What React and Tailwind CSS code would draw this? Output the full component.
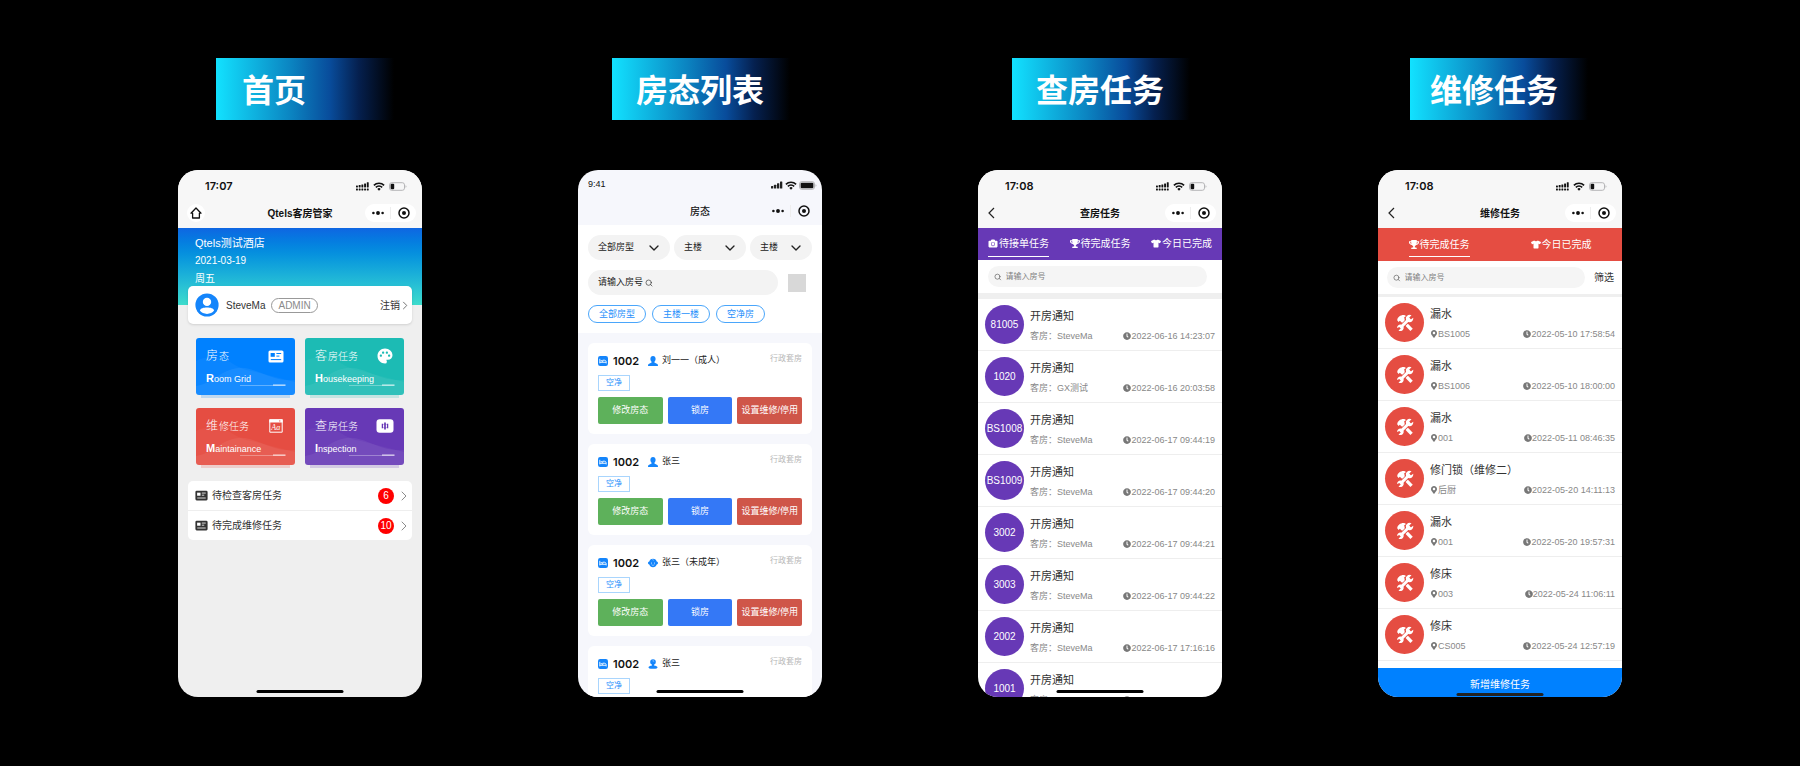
import React from 'react';
import { FaCamera, FaTrophy, FaTshirt, FaClock, FaMapMarkerAlt } from 'react-icons/fa';
import { MdPalette } from 'react-icons/md';
import { ChevronDown, ChevronRight, Search } from 'lucide-react';

/* ---------- icons ---------- */

function SignalDual() {
  return (
    <svg viewBox="0 0 13 9" className="h-[9px] w-[13px]" fill="#111" aria-hidden="true">
      <rect x="0" y="3.6" width="1.9" height="1.9" rx=".4" />
      <rect x="2.7" y="3" width="1.9" height="2.5" rx=".4" />
      <rect x="5.4" y="2.4" width="1.9" height="3.1" rx=".4" />
      <rect x="8.1" y="1.4" width="1.9" height="4.1" rx=".4" />
      <rect x="10.8" y=".2" width="1.9" height="5.3" rx=".4" />
      {[0, 2.7, 5.4, 8.1, 10.8].map((x) => (
        <rect key={x} x={x} y="6.6" width="1.9" height="1.9" rx=".4" />
      ))}
    </svg>
  );
}

function SignalBars() {
  return (
    <svg viewBox="0 0 12 8" className="h-2 w-3" fill="#222" aria-hidden="true">
      <rect x="0" y="5" width="2.3" height="2.5" rx=".5" />
      <rect x="3" y="3.8" width="2.3" height="3.7" rx=".5" />
      <rect x="6" y="2.2" width="2.3" height="5.3" rx=".5" />
      <rect x="9" y=".6" width="2.3" height="6.9" rx=".5" />
    </svg>
  );
}

function Wifi() {
  return (
    <svg viewBox="0 0 12 9" className="h-[9px] w-3" aria-hidden="true">
      <path d="M.9 3.4a7.3 7.3 0 0 1 10.2 0" fill="none" stroke="#111" strokeWidth="1.6" />
      <path d="M2.8 5.4a4.6 4.6 0 0 1 6.4 0" fill="none" stroke="#111" strokeWidth="1.5" />
      <path d="M4.3 6.9a2.5 2.5 0 0 1 3.4 0L6 8.7z" fill="#111" />
    </svg>
  );
}

function Battery({ full }) {
  return (
    <svg viewBox="0 0 18 9" className="h-[9px] w-[18px]" aria-hidden="true">
      <rect x=".5" y=".7" width="15" height="7.6" rx="2.2" fill="none" stroke="#b5b5b7" />
      <path d="M16.6 3.2c1 .5 1 2.1 0 2.6z" fill="#a5a5a7" />
      <rect x="1.6" y="1.8" width={full ? 12.8 : 3.6} height="5.4" rx="1" fill="#111" />
    </svg>
  );
}

function HomeIcon() {
  return (
    <svg viewBox="0 0 12 12" className="h-3 w-3" fill="none" stroke="#111" strokeWidth="1.3" strokeLinejoin="round" aria-hidden="true">
      <path d="M6 1 11 6.2H9.4V11H2.6V6.2H1z" />
    </svg>
  );
}

function BackIcon() {
  return (
    <svg viewBox="0 0 7 12" className="h-3 w-[7px]" fill="none" stroke="#222" strokeWidth="1.2" aria-hidden="true">
      <path d="M6 1 1 6l5 5" />
    </svg>
  );
}

function NewsIcon({ fg, hole, className }) {
  return (
    <svg viewBox="0 0 16 13" className={className} aria-hidden="true">
      <rect x=".5" y=".5" width="15" height="12" rx="1.6" fill={fg} />
      <rect x="2.6" y="3" width="4.2" height="3.8" fill={hole} />
      <path d="M8.4 3.5h4.8M8.4 6.1h3M2.8 9.6h10.4" stroke={hole} strokeWidth="1" />
    </svg>
  );
}

function BrandIcon() {
  return (
    <svg viewBox="0 0 14 14" className="h-[14px] w-[14px]" aria-hidden="true">
      <path d="M.8.8h12.4v12.4H.8z" fill="none" stroke="#fff" strokeWidth="1" />
      <path d="M.3.3h13.4v3.2H.3z" fill="#fff" />
      <circle cx="10.8" cy="1.9" r=".6" fill="#e54d42" />
      <text x="6.8" y="11" fontSize="8" fontStyle="italic" textAnchor="middle" fill="#fff" fontFamily="Liberation Serif, serif">Aa</text>
    </svg>
  );
}

function InspectIcon() {
  return (
    <svg viewBox="0 0 18 14" className="h-[14px] w-[18px]" aria-hidden="true">
      <rect x=".5" y=".3" width="17" height="13.4" rx="3.2" fill="#fff" />
      <path d="M9 3.4v7.2" stroke="#6739b6" strokeWidth="1.7" />
      <path d="M6.4 4.7v4.6M11.6 4.7v4.6" stroke="#6739b6" strokeWidth="1.3" />
      <path d="M6.4 5.4h5.2M6.4 8.6h5.2" stroke="#6739b6" strokeOpacity=".45" strokeWidth=".8" />
    </svg>
  );
}

function ToolsIcon() {
  return (
    <svg viewBox="0 0 18 18" className="h-[18px] w-[18px]" fill="none" aria-hidden="true">
      <path d="M6.2 6.2 15.6 15.8" stroke="#fff" strokeWidth="3.3" />
      <path d="M1.2 6.2C1.6 3 4.4.8 8.2 1l1.9.9-1.9 1.4.5 2.5-2.9 2.7-2-1.7-1.2 1.1z" fill="#fff" />
      <path d="M5.2 13.2 13.3 5" stroke="#e54d42" strokeWidth="4.6" />
      <path d="M4.4 13.8 13.8 4.4" stroke="#fff" strokeWidth="2.9" />
      <path d="M15.5 1.3a3.7 3.7 0 1 0 1.7 2.5l-2.4 1.6-1.7-1.6z" fill="#fff" />
      <path d="M2.5 16.5a3.3 3.3 0 1 0-1.4-2.4l2.2-1.2 1.5 1.5z" fill="#fff" />
    </svg>
  );
}

function Avatar() {
  return (
    <svg viewBox="0 0 24 24" className="h-6 w-6" aria-hidden="true">
      <circle cx="12" cy="12" r="11.6" fill="#1485fb" />
      <circle cx="12" cy="8.9" r="4.2" fill="#fff" />
      <path d="M4.9 17.6c.6-2.6 3.6-3.2 7.1-3.2s6.5.6 7.1 3.2c-1.5 2.1-4.2 3.3-7.1 3.3s-5.6-1.2-7.1-3.3z" fill="#fff" />
    </svg>
  );
}

function BedIcon() {
  return (
    <svg viewBox="0 0 10 10" className="h-[10px] w-[10px]" aria-hidden="true">
      <rect width="10" height="10" rx="2.2" fill="#1485fb" />
      <path d="M1.8 2.8v4.6M1.8 6.3h6.4v1.1M4.7 6V4.2h1.6c1.1 0 1.9.7 1.9 2" fill="none" stroke="#fff" strokeWidth=".9" />
      <circle cx="3.2" cy="4.7" r=".7" fill="#fff" />
    </svg>
  );
}

function GuestIcon({ kind }) {
  if (kind === 'child') {
    return (
      <svg viewBox="0 0 10 10" className="h-[10px] w-[10px]" aria-hidden="true">
        <path d="M5 .7c2.2 0 3.3 1.3 3.7 2.9.8.1 1.3.7 1.3 1.5s-.5 1.4-1.3 1.5C8.2 8.2 6.9 9.3 5 9.3S1.8 8.2 1.3 6.6C.5 6.5 0 5.9 0 5.1s.5-1.4 1.3-1.5C1.7 2 2.8.7 5 .7z" fill="#1485fb" />
        <circle cx="3.5" cy="4.9" r=".5" fill="#fff" />
        <circle cx="6.5" cy="4.9" r=".5" fill="#fff" />
        <path d="M3.6 6.7c.8.8 2 .8 2.8 0M5 1.1c-.5.6-.3 1.2.4 1.2" fill="none" stroke="#fff" strokeWidth=".5" />
      </svg>
    );
  }
  if (kind === 'elder') {
    return (
      <svg viewBox="0 0 10 10" className="h-[10px] w-[10px]" aria-hidden="true">
        <circle cx="5" cy="3" r="2.8" fill="#1485fb" />
        <path d="M4 5h2v1.5c2 .3 3.5.9 3.5 2 0 1-1 1.3-4.5 1.3S.5 9.5.5 8.5c0-1.1 1.5-1.7 3.5-2z" fill="#1485fb" />
        <path d="M4.6 1.8c.7-.4 1.3 0 1.1.8" fill="none" stroke="#fff" strokeWidth=".5" />
      </svg>
    );
  }
  return (
    <svg viewBox="0 0 10 10" className="h-[10px] w-[10px]" aria-hidden="true">
      <path d="M5 0c1.6 0 2.6 1.2 2.6 2.8 0 1.3-.5 2.4-1.2 3v.8L9.3 8c.5.3.7.9.7 2H0c0-1.1.2-1.7.7-2l2.9-1.4v-.8c-.7-.6-1.2-1.7-1.2-3C2.4 1.2 3.4 0 5 0z" fill="#1485fb" />
    </svg>
  );
}

/* ---------- phone shell ---------- */

function Phone({ label, bg, bar = 'bottom-[4px] bg-black', children }) {
  return (
    <section
      aria-label={label}
      className={`relative flex aspect-[244/527] w-full max-w-[244px] flex-col overflow-hidden rounded-[20px] ${bg}`}
    >
      {children}
      <div className={`absolute left-1/2 h-[3px] w-[87px] -translate-x-1/2 rounded-full ${bar}`} />
    </section>
  );
}

function Capsule({ plain }) {
  return (
    <div className={`flex h-[18px] w-[51px] items-center rounded-full ${plain ? '' : 'bg-white'}`}>
      <button aria-label="更多" className="flex flex-1 justify-center">
        <svg viewBox="0 0 12 4" className="h-1 w-3" fill="#111" aria-hidden="true">
          <circle cx="1.4" cy="2" r="1.3" />
          <circle cx="6" cy="2" r="1.95" />
          <circle cx="10.6" cy="2" r="1.3" />
        </svg>
      </button>
      <span className="h-3 w-px bg-[#eeeeee]" />
      <button aria-label="关闭" className="flex flex-1 justify-center">
        <svg viewBox="0 0 12 12" className="h-3 w-3" aria-hidden="true">
          <circle cx="6" cy="6" r="5" fill="none" stroke="#111" strokeWidth="1.5" />
          <circle cx="6" cy="6" r="2" fill="#111" />
        </svg>
      </button>
    </div>
  );
}

function NavRow({ title, left, plain }) {
  return (
    <div className="grid h-[22px] grid-cols-[1fr_auto_1fr] items-center px-[6px]">
      <div className="flex">{left}</div>
      <h2 className={`pt-[2px] text-[10px] leading-5 text-[#111] ${plain ? 'font-medium' : 'font-bold'}`}>{title}</h2>
      <div className="flex justify-end">
        <Capsule plain={plain} />
      </div>
    </div>
  );
}

function Header({ time, title, home }) {
  return (
    <header className="shrink-0 bg-[#f7f7f7] pb-1">
      <div className="flex h-8 items-center justify-between pr-[15px] pl-[27px]">
        <span className="font-[Inter,sans-serif] text-[11px] leading-4 font-semibold text-[#111]">{time}</span>
        <div className="flex items-center gap-1">
          <SignalDual />
          <Wifi />
          <Battery />
        </div>
      </div>
      <NavRow
        title={title}
        left={
          home ? (
            <button aria-label="首页" className="ml-[3px] flex h-[18px] w-[18px] items-center justify-center rounded-full bg-white">
              <HomeIcon />
            </button>
          ) : (
            <button aria-label="返回" className="ml-1">
              <BackIcon />
            </button>
          )
        }
      />
    </header>
  );
}

/* ---------- home ---------- */

const modules = [
  {
    head: '房', rest: '态', cap: 'R', en: 'oom Grid',
    tone: 'bg-[#0081ff] shadow-[0_8px_0_-5px_#bfd8ef]',
    icon: <NewsIcon fg="#fff" hole="#0081ff" className="h-[13px] w-4" />,
  },
  {
    head: '客', rest: '房任务', cap: 'H', en: 'ousekeeping',
    tone: 'bg-[#1cbbb4] shadow-[0_8px_0_-5px_#c5e4e2]',
    icon: <MdPalette className="h-[18px] w-[18px]" />,
  },
  {
    head: '维', rest: '修任务', cap: 'M', en: 'aintainance',
    tone: 'bg-[#e54d42] shadow-[0_8px_0_-5px_#edcdcb]',
    icon: <BrandIcon />,
  },
  {
    head: '查', rest: '房任务', cap: 'I', en: 'nspection',
    tone: 'bg-[#6739b6] shadow-[0_8px_0_-5px_#d3cae3]',
    icon: <InspectIcon />,
  },
];

function ModuleCard({ head, rest, cap, en, tone, icon }) {
  return (
    <button className={`relative h-[57px] rounded-[3px] px-[10px] pt-1 text-left text-white ${tone}`}>
      <svg viewBox="0 0 99 57" preserveAspectRatio="none" className="absolute inset-0 h-full w-full" aria-hidden="true">
        <path d="M0 23c10-5 22-5 34 1 8 5 14 8 22 9L99 44v13H0z" fill="#fff" fillOpacity=".04" />
        <path d="M0 48c18-3 24-16 42-18s32 14 57 12v15H0z" fill="#fff" fillOpacity=".06" />
        <path d="M44 47.5h33" stroke="#fff" strokeOpacity=".45" strokeWidth=".7" />
        <path d="M77 47.2h12.5" stroke="#fff" strokeOpacity=".65" strokeWidth="1.6" />
      </svg>
      <span className="relative flex h-5 items-center justify-between">
        <span className="flex items-baseline gap-px text-[10px] leading-5 font-light">
          <span className="text-[12px]">{head}</span>
          <span>{rest}</span>
        </span>
        <span className="flex w-[18px] justify-center">{icon}</span>
      </span>
      <span className="relative flex items-baseline text-[9px] leading-6">
        <b className="text-[11px]">{cap}</b>
        <span>{en}</span>
      </span>
    </button>
  );
}

function HomePage() {
  return (
    <Phone label="首页" bg="bg-[#efefef]">
      <Header time="17:07" title="Qtels客房管家" home />
      <div className="bg-linear-to-b from-[#0f66e2] to-[#3edccc] px-[17px] pt-[6px] pb-[17px] text-[10px] leading-[18px] text-white">
        <p className="text-[11px]">Qtels测试酒店</p>
        <p>2021-03-19</p>
        <p>周五</p>
      </div>
      <div className="-mt-[19px] flex flex-col px-[10px]">
        <div className="relative flex h-[38px] items-center rounded-[5px] bg-white pr-1 pl-[7px] text-[10px] text-[#333] shadow-sm">
          <Avatar />
          <span className="ml-[7px]">SteveMa</span>
          <span className="ml-[6px] rounded-full border border-[#999] px-[6px] leading-[13px] text-[#8a8a8a]">ADMIN</span>
          <a href="#logout" className="ml-auto flex items-center">
            注销
            <svg viewBox="0 0 6 10" className="ml-[2px] h-[9px] w-[6px]" fill="none" stroke="#666" aria-hidden="true">
              <path d="M1 1l4 4-4 4" />
            </svg>
          </a>
        </div>
        <div className="mt-[14px] grid grid-cols-2 gap-x-[10px] gap-y-[13px] px-2">
          {modules.map((m) => (
            <ModuleCard key={m.head} {...m} />
          ))}
        </div>
        <ul className="mt-4 divide-y divide-[#eee] rounded-[5px] bg-white">
          {[['待检查客房任务', 6], ['待完成维修任务', 10]].map(([t, n]) => (
            <li key={t}>
              <a href="#tasks" className="flex h-[29px] items-center pl-[7px] text-[10px] text-[#333]">
                <NewsIcon fg="#333" hole="#fff" className="h-[11px] w-[13px]" />
                <span className="ml-1">{t}</span>
                <span className="mr-[2px] ml-auto flex h-4 w-4 items-center justify-center rounded-full bg-[#ff0000] text-white">{n}</span>
                <ChevronRight className="h-4 w-4 text-[#8c8c8c]" strokeWidth={1.5} />
              </a>
            </li>
          ))}
        </ul>
      </div>
    </Phone>
  );
}

/* ---------- room status ---------- */

function Picker({ label, value, grow }) {
  return (
    <label className={`relative flex items-center ${grow}`}>
      <select
        aria-label={label}
        defaultValue={value}
        className="h-[25px] w-full appearance-none rounded-full bg-[#f3f3f3] pt-px pl-[10px] text-[9px] text-[#222]"
      >
        <option>{value}</option>
      </select>
      <ChevronDown className="pointer-events-none absolute right-[8px] h-4 w-4 text-[#222]" strokeWidth={2} />
    </label>
  );
}

const guests = [
  { name: '刘一一（成人）', kind: 'adult', actions: true },
  { name: '张三', kind: 'adult', actions: true },
  { name: '张三（未成年）', kind: 'child', actions: true },
  { name: '张三', kind: 'elder', actions: false },
];

function RoomCard({ name, kind, actions }) {
  return (
    <article className="min-h-[91px] rounded-[6px] bg-white p-[10px]">
      <div className="flex h-4 items-center text-[9px] text-[#222]">
        <BedIcon />
        <b className="ml-[5px] w-[35px] font-[Inter,sans-serif] text-[11px] font-semibold text-[#111]">1002</b>
        <GuestIcon kind={kind} />
        <span className="ml-1">{name}</span>
        <span className="ml-auto self-start text-[8px] leading-3 text-[#b8b8b8]">行政套房</span>
      </div>
      <span className="mt-[6px] flex h-4 w-8 items-center justify-center border border-[#a9d5fd] text-[8px] text-[#1f8ffb]">空净</span>
      {actions && (
        <div className="mt-[6px] grid grid-cols-3 gap-[5px] text-[9px] whitespace-nowrap text-white">
          <button className="h-[27px] rounded-[2px] bg-[#5eb15b]">修改房态</button>
          <button className="h-[27px] rounded-[2px] bg-[#3478f6]">锁房</button>
          <button className="h-[27px] rounded-[2px] bg-[#cf5649]">设置维修/停用</button>
        </div>
      )}
    </article>
  );
}

function RoomsPage() {
  return (
    <Phone label="房态列表" bg="bg-[#f6f7fc]">
      <header className="shrink-0 pb-[3px]">
        <div className="flex h-[30px] items-center justify-between pr-[5px] pl-[10px]">
          <span className="text-[9px] text-[#111]">9:41</span>
          <div className="flex items-center gap-[2px]">
            <SignalBars />
            <Wifi />
            <Battery full />
          </div>
        </div>
        <NavRow title="房态" plain />
      </header>
      <div className="flex flex-col gap-[10px] bg-white px-[10px] py-[10px]">
        <div className="flex gap-1">
          <Picker label="房型" value="全部房型" grow="flex-[82]" />
          <Picker label="楼栋" value="主楼" grow="flex-[72]" />
          <Picker label="楼层" value="主楼" grow="flex-[62]" />
        </div>
        <div className="flex items-center gap-[10px]">
          <label className="flex h-[25px] flex-1 items-center rounded-full bg-[#f3f3f3] pl-[10px]">
            <input aria-label="房号" placeholder="请输入房号" className="w-[47px] text-[9px] outline-none placeholder:text-[#222]" />
            <Search className="h-2 w-2 text-[#333]" strokeWidth={2} />
          </label>
          <button aria-label="扫码" className="mr-[6px] h-[18px] w-[18px] bg-[#d8d8d8]" />
        </div>
        <div className="flex gap-[6px] text-[9px] leading-4 text-[#1f8ffb]">
          {['全部房型', '主楼一楼', '空净房'].map((t) => (
            <button key={t} className="rounded-full border border-[#4aa6fb] px-[10px]">{t}</button>
          ))}
        </div>
      </div>
      <div className="flex flex-col gap-[10px] px-[10px] pt-[10px]">
        {guests.map((g, i) => (
          <RoomCard key={i} {...g} />
        ))}
      </div>
    </Phone>
  );
}

/* ---------- task lists ---------- */

function Tab({ icon: Icon, active, children }) {
  return (
    <button
      className={`flex h-[25px] items-center gap-px border-b text-[10px] whitespace-nowrap text-white ${active ? 'border-white' : 'border-transparent'}`}
    >
      <Icon className="h-[9px] w-[10px]" />
      {children}
    </button>
  );
}

function SearchField() {
  return (
    <label className="flex h-[21px] flex-1 items-center gap-1 rounded-full bg-[#f5f5f5] pl-[6px]">
      <Search className="h-2 w-2 text-[#555]" strokeWidth={2} />
      <input aria-label="房号" placeholder="请输入房号" className="w-full min-w-0 text-[8px] outline-none placeholder:text-[#808080]" />
    </label>
  );
}

function TaskRow({ badge, tone, title, sub, time }) {
  return (
    <li className="flex h-[52px] shrink-0 items-center border-b border-[#eeeeee] px-[7px]">
      <span className={`flex h-[39px] w-[39px] shrink-0 items-center justify-center rounded-full text-[10px] text-white ${tone}`}>
        {badge}
      </span>
      <div className="ml-[6px] flex-1 pt-px">
        <p className="text-[11px] leading-[22px] text-[#333]">{title}</p>
        <div className="flex items-center justify-between text-[9px] leading-[18px] whitespace-nowrap text-[#888]">
          <span className="flex items-center">{sub}</span>
          <span className="flex items-center">
            <FaClock className="h-2 w-2 text-[#777]" />
            {time}
          </span>
        </div>
      </div>
    </li>
  );
}

const inspections = [
  ['81005', 'SteveMa', '2022-06-16 14:23:07'],
  ['1020', 'GX测试', '2022-06-16 20:03:58'],
  ['BS1008', 'SteveMa', '2022-06-17 09:44:19'],
  ['BS1009', 'SteveMa', '2022-06-17 09:44:20'],
  ['3002', 'SteveMa', '2022-06-17 09:44:21'],
  ['3003', 'SteveMa', '2022-06-17 09:44:22'],
  ['2002', 'SteveMa', '2022-06-17 17:16:16'],
  ['1001', 'SteveMa', '2022-06-17 17:52:20'],
];

function InspectionPage() {
  return (
    <Phone label="查房任务" bg="bg-white">
      <Header time="17:08" title="查房任务" />
      <nav className="flex h-8 shrink-0 items-center justify-between bg-[#6739b6] px-[10px]">
        <Tab icon={FaCamera} active>待接单任务</Tab>
        <Tab icon={FaTrophy}>待完成任务</Tab>
        <Tab icon={FaTshirt}>今日已完成</Tab>
      </nav>
      <div className="flex h-[33px] shrink-0 items-center pr-[15px] pl-[10px]">
        <SearchField />
      </div>
      <div className="h-[6px] shrink-0 bg-[#efefef]" />
      <ul className="flex flex-col">
        {inspections.map(([room, who, time]) => (
          <TaskRow key={room} badge={room} tone="bg-[#6739b6]" title="开房通知" sub={`客房：${who}`} time={time} />
        ))}
      </ul>
    </Phone>
  );
}

const repairs = [
  ['漏水', 'BS1005', '2022-05-10 17:58:54'],
  ['漏水', 'BS1006', '2022-05-10 18:00:00'],
  ['漏水', '001', '2022-05-11 08:46:35'],
  ['修门锁（维修二）', '后厨', '2022-05-20 14:11:13'],
  ['漏水', '001', '2022-05-20 19:57:31'],
  ['修床', '003', '2022-05-24 11:06:11'],
  ['修床', 'CS005', '2022-05-24 12:57:19'],
];

function RepairPage() {
  return (
    <Phone label="维修任务" bg="bg-white" bar="bottom-[1px] bg-[#222]">
      <Header time="17:08" title="维修任务" />
      <nav className="grid h-[33px] shrink-0 grid-cols-2 place-items-center bg-[#e54d42]">
        <Tab icon={FaTrophy} active>待完成任务</Tab>
        <Tab icon={FaTshirt}>今日已完成</Tab>
      </nav>
      <div className="flex h-[33px] shrink-0 items-center gap-[9px] pr-2 pl-[9px]">
        <SearchField />
        <button className="text-[10px] text-[#333]">筛选</button>
      </div>
      <div className="h-[3px] shrink-0 bg-[#efefef]" />
      <ul className="flex min-h-0 flex-1 flex-col">
        {repairs.map(([title, place, time]) => (
          <TaskRow
            key={time}
            badge={<ToolsIcon />}
            tone="bg-[#e54d42]"
            title={title}
            sub={<><FaMapMarkerAlt className="h-2 w-2 text-[#777]" />{place}</>}
            time={time}
          />
        ))}
      </ul>
      <button className="h-[29px] shrink-0 bg-[#0081ff] pt-1 text-[10px] text-white">新增维修任务</button>
    </Phone>
  );
}

/* ---------- board ---------- */

const columns = [
  { title: '首页', place: 'ml-[38px] pl-[26px]', Page: HomePage },
  { title: '房态列表', place: 'ml-[34px] pl-6', Page: RoomsPage },
  { title: '查房任务', place: 'ml-[34px] pl-6', Page: InspectionPage },
  { title: '维修任务', place: 'ml-8 pl-5', Page: RepairPage },
];

export default function App() {
  return (
    <main className="grid min-h-screen grid-cols-4 items-start bg-black px-[100px] pt-[58px] pb-[69px] font-['Liberation_Sans','Noto_Sans_CJK_SC',sans-serif]">
      {columns.map(({ title, place, Page }) => (
        <div key={title} className="mx-auto flex w-full max-w-[244px] flex-col gap-[50px]">
          <h1
            className={`w-[178px] bg-[linear-gradient(90deg,#12e2ff_0%,#0b84c1_42%,#084c9b_64%,#05204f_80%,#000_100%)] pt-1 text-[32px] leading-[58px] font-semibold whitespace-nowrap text-white ${place}`}
          >
            {title}
          </h1>
          <Page />
        </div>
      ))}
    </main>
  );
}
